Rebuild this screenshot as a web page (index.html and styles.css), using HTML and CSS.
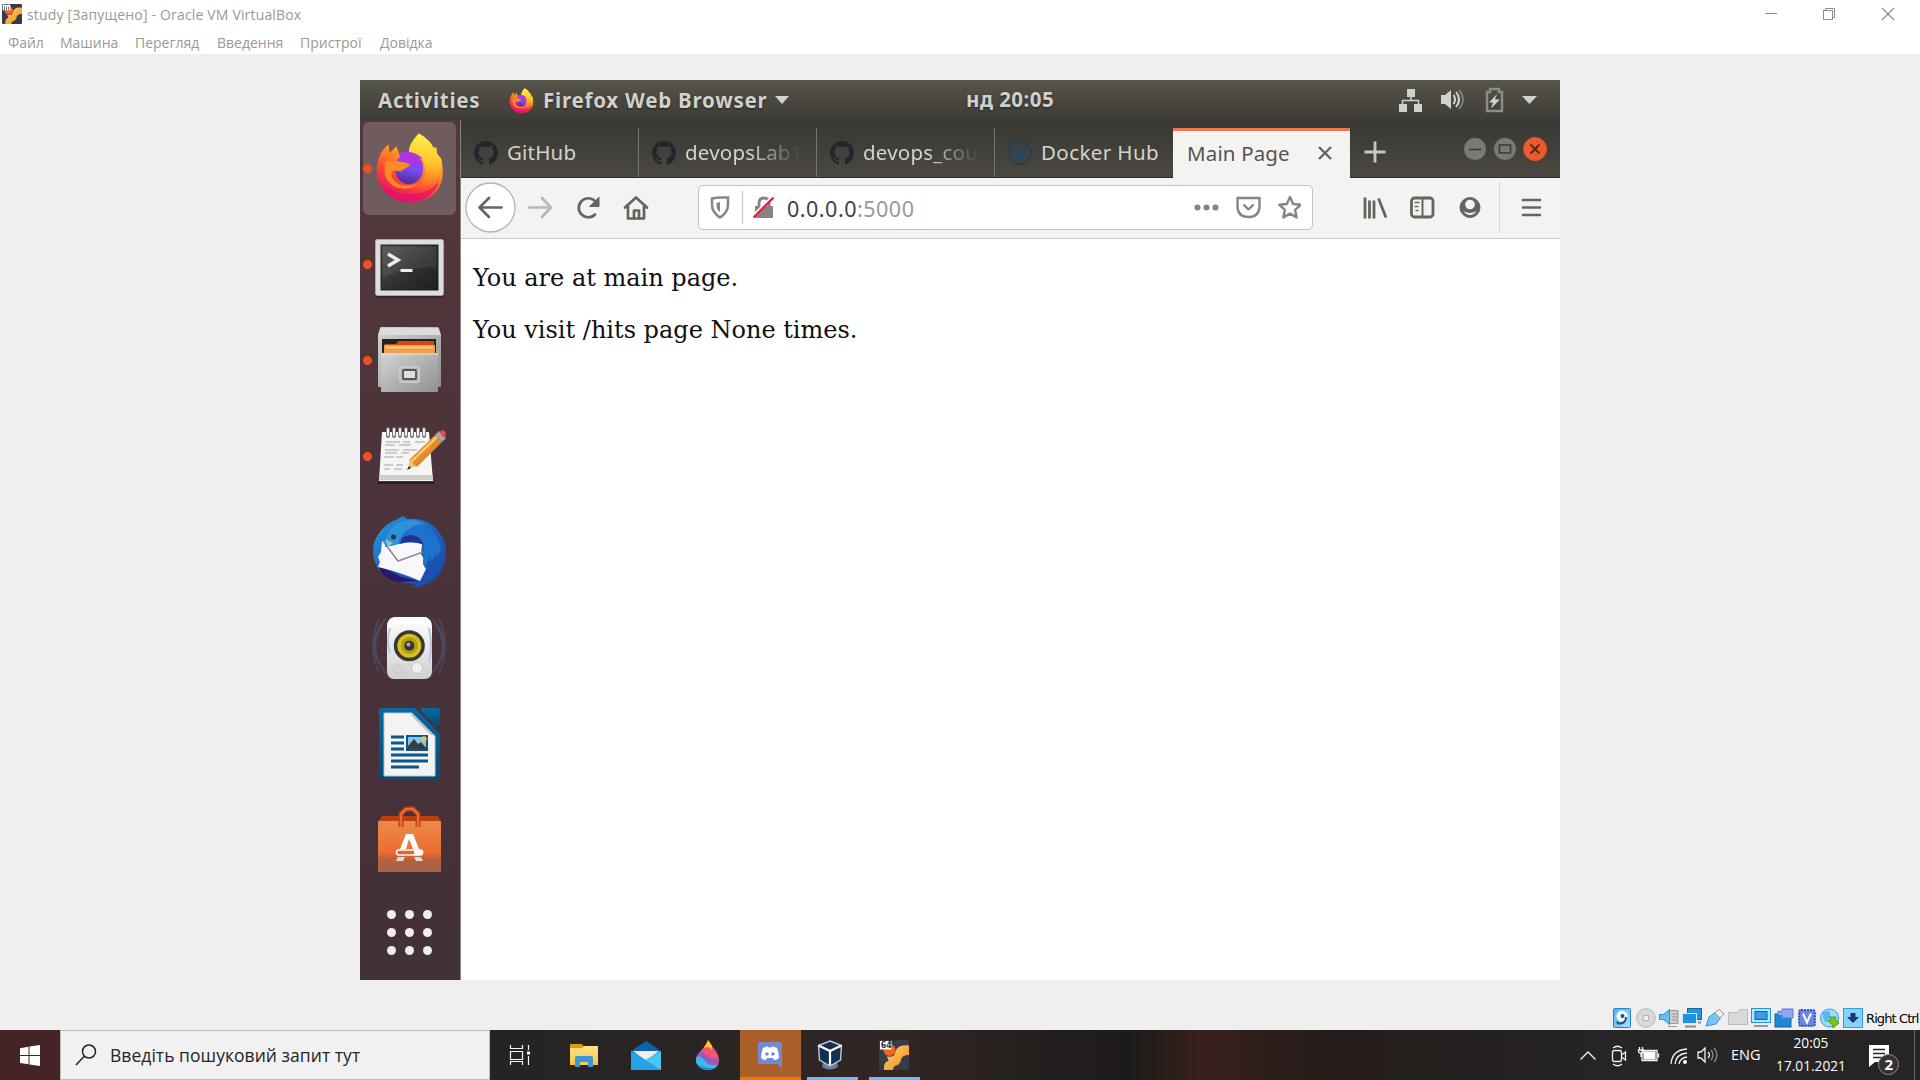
FILE: index.html
```html
<!DOCTYPE html>
<html lang="uk">
<head>
<meta charset="utf-8">
<title>study - Oracle VM VirtualBox</title>
<link rel="stylesheet" href="styles.css">
</head>
<body>
<svg width="0" height="0" class="defs" aria-hidden="true">
  <defs>
    <linearGradient id="fxBody" x1=".8" y1=".1" x2=".35" y2="1"><stop offset="0" stop-color="#ffe03a"/><stop offset=".35" stop-color="#ff9a22"/><stop offset=".68" stop-color="#ff4436"/><stop offset="1" stop-color="#e0106e"/></linearGradient>
    <linearGradient id="fxTail" x1=".5" y1="0" x2=".4" y2="1"><stop offset="0" stop-color="#fff250"/><stop offset=".5" stop-color="#ffc52a"/><stop offset="1" stop-color="#ff7a30" stop-opacity=".2"/></linearGradient>
    <linearGradient id="fxGlobe" x1=".6" y1="0" x2=".4" y2="1"><stop offset="0" stop-color="#b833e1"/><stop offset=".5" stop-color="#7a4cf0"/><stop offset="1" stop-color="#4a2c98"/></linearGradient>
    <linearGradient id="term" x1="0" y1="0" x2="1" y2="1"><stop offset="0" stop-color="#555"/><stop offset=".5" stop-color="#333"/><stop offset="1" stop-color="#1d1d1d"/></linearGradient>
    <linearGradient id="steel" x1="0" y1="0" x2="1" y2="1"><stop offset="0" stop-color="#d4d4d4"/><stop offset="1" stop-color="#909090"/></linearGradient>
    <linearGradient id="white" x1="0" y1="0" x2="0" y2="1"><stop offset="0" stop-color="#fff"/><stop offset="1" stop-color="#cfcfcf"/></linearGradient>
    <linearGradient id="bird" x1="0" y1="0" x2="1" y2="1"><stop offset="0" stop-color="#2a9be0"/><stop offset=".45" stop-color="#1d66c6"/><stop offset="1" stop-color="#1d3f9c"/></linearGradient>
    <linearGradient id="bag" x1="0" y1="0" x2="0" y2="1"><stop offset="0" stop-color="#ea8b4c"/><stop offset=".62" stop-color="#ed6c30"/><stop offset=".75" stop-color="#b9603c"/><stop offset="1" stop-color="#a4644a"/></linearGradient>
    <linearGradient id="writer" x1="0" y1="0" x2="0" y2="1"><stop offset="0" stop-color="#0869a3"/><stop offset="1" stop-color="#054a75"/></linearGradient>
    <linearGradient id="pencil" x1="0" y1="0" x2="1" y2="1"><stop offset="0" stop-color="#ffb54b"/><stop offset="1" stop-color="#c96a12"/></linearGradient>
    <linearGradient id="sky" x1="0" y1="0" x2="1" y2="1"><stop offset="0" stop-color="#4fb0ee"/><stop offset="1" stop-color="#a5e4ff"/></linearGradient>
    <linearGradient id="folder" x1="0" y1="0" x2="0" y2="1"><stop offset="0" stop-color="#ffe08a"/><stop offset="1" stop-color="#fcc73e"/></linearGradient>
    <linearGradient id="gold" x1="0" y1="0" x2="1" y2="1"><stop offset="0" stop-color="#ffd27a"/><stop offset="1" stop-color="#f08a10"/></linearGradient>
    <symbol id="firefox" viewBox="15 11 70 72">
      <path d="M59 12c7 5 10 10 12 16l5-2 2 7 4 5c4 16 1 27-6 35C65 84 44 87 30 77 16 68 13 51 18 37c2-6 5-10 10-14l1 9 7-7 3 8 9 0 11-21z" fill="url(#fxBody)"/>
      <path d="M59 12c-6 6-11 14-10 20 8-1 14 4 16 12 3 14-5 24-18 25 22 3 38-12 35-31l-4-5-1-7-2 3C73 22 67 16 59 12z" fill="url(#fxTail)"/>
      <ellipse cx="49" cy="48" rx="14.500" ry="16" fill="url(#fxGlobe)"/>
      <path d="M38 33c7-3 17-3 25 5l-10-1 11 5c-9-1-12 1-15 2z" fill="#b233e0"/>
      <path d="M24 42c4-3 12-2 17-1 4 1 8 1 9 3-2 4-7 4-9 7-4 0-6-2-10 0-2 12 14 19 28 12-10 10-31 7-35-9z" fill="#ff8a24"/>
      <path d="M19 60c12 18 48 20 61 1-9 28-51 30-61-1z" fill="#e3126c" opacity=".75"/>
    </symbol>
    <symbol id="github" viewBox="0 0 16 16">
      <path fill="#20262c" d="M8 0C3.58 0 0 3.58 0 8c0 3.54 2.29 6.53 5.47 7.59.4.07.55-.17.55-.38 0-.19-.01-.82-.01-1.49-2.01.37-2.53-.49-2.69-.94-.09-.23-.48-.94-.82-1.13-.28-.15-.68-.52-.01-.53.63-.01 1.08.58 1.23.82.72 1.21 1.87.87 2.33.66.07-.52.28-.87.51-1.07-1.78-.2-3.64-.89-3.64-3.95 0-.87.31-1.59.82-2.15-.08-.2-.36-1.02.08-2.12 0 0 .67-.21 2.2.82.64-.18 1.32-.27 2-.27s1.36.09 2 .27c1.53-1.04 2.2-.82 2.2-.82.44 1.1.16 1.92.08 2.12.51.56.82 1.27.82 2.15 0 3.07-1.87 3.75-3.65 3.95.29.25.54.73.54 1.48 0 1.07-.01 1.93-.01 2.2 0 .21.15.46.55.38A8 8 0 0 0 16 8c0-4.42-3.58-8-8-8z"/>
    </symbol>
    <symbol id="vm" viewBox="0 0 30 30">
      <rect width="30" height="30" rx="1.500" fill="#363b47"/>
      <circle cx="10.500" cy="10" r="6" fill="#f5641c"/>
      <path d="M30 5.500c-9-1-13 2-14 8-1 3-3 3.500-8 3l1.500 4.500C5 22 5 26 5 30h9c0-3 2-4.500 4.500-5 3.500-1 3-6 5-8 1.500-1.500 4-2 6.500-2z" fill="url(#gold)"/>
      <rect x="1" y="1" width="11.500" height="8.500" fill="#fff"/>
    </symbol>
  </defs>
</svg>

<header class="host-title">
  <svg class="vm-icon" width="20" height="20"><use href="#vm"/><path d="M2.500 2.500v3.500M4.500 2.500v3.500M6.500 2.500v3.500" stroke="#555" stroke-width=".8"/></svg>
  <span class="title-text">study [Запущено] - Oracle VM VirtualBox</span>
  <svg class="host-controls" width="160" height="28" fill="none" stroke="#8c8c8c">
    <path d="M5 13.500h12"/>
    <rect x="63.500" y="10.500" width="9" height="9"/><path d="M65.500 10.500v-2h9v9h-2"/>
    <path d="M122 8l12 12M134 8l-12 12" stroke-width="1.100"/>
  </svg>
</header>
<nav class="host-menu">
  <span class="m1">Файл</span><span class="m2">Машина</span><span class="m3">Перегляд</span><span class="m4">Введення</span><span class="m5">Пристрої</span><span class="m6">Довідка</span>
</nav>

<main class="vm-area">
  <section class="guest">
    <div class="topbar">
      <div class="top-left">
        <span class="activities">Activities</span>
        <svg class="fx-small" width="25" height="25"><use href="#firefox"/></svg>
        <span class="app-name">Firefox Web Browser</span>
        <svg width="16" height="10"><path d="M1 1h14L8 9z" fill="#d3d3cf"/></svg>
      </div>
      <span class="clock">нд 20:05</span>
      <svg class="indicators" width="160" height="40">
        <g fill="#d0d0cc"><path d="M17 9h8v8h-8zM9 24h8v8H9zM24 24h8v8h-8z"/><path d="M21 16v5M12.500 25v-4.500h16V25" fill="none" stroke="#d0d0cc" stroke-width="1.500"/>
        <path d="M51 15h4l6-5v19l-6-5h-4z"/></g>
        <path d="M63.500 15q3 4.500 0 9" fill="none" stroke="#d0d0cc" stroke-width="2"/>
        <path d="M66 12q6 7.500 0 15" fill="none" stroke="#d0d0cc" stroke-width="2"/>
        <path d="M69 10q8 9.500 0 19" fill="none" stroke="#7b7b74" stroke-width="2"/>
        <path d="M97 12h3V9h9v3h3v19H97z" fill="none" stroke="#8d8d87" stroke-width="2.400"/>
        <path d="M107 14l-8 8.500h4l-2 6 9-9h-5z" fill="#d0d0cc"/>
        <path d="M132 16h15l-7.500 8z" fill="#d0d0cc"/>
      </svg>
    </div>
    <div class="guest-body">
      <aside class="dock">
        <div class="slot active"><i class="dot"></i><svg class="fx-large" width="68" height="71"><use href="#firefox"/></svg></div>
        <div class="slot"><i class="dot"></i><svg width="100" height="96">
          <rect x="15" y="24" width="69" height="58" rx="3" fill="#251a1c" opacity=".5"/>
          <rect x="15.500" y="23.500" width="68" height="56" rx="2" fill="#dedede" stroke="#a9a9a9"/>
          <rect x="21" y="29" width="57" height="45" fill="url(#term)" stroke="#202020"/><path d="M23 31h53v20q-28 0-53 10z" fill="#fff" opacity=".07"/>
          <path d="M28 38l10 6-10 6" fill="none" stroke="#eee" stroke-width="3.500"/><path d="M40.500 54.500h12" stroke="#eee" stroke-width="3"/></svg></div>
        <div class="slot"><i class="dot"></i><svg width="100" height="96">
          <path d="M20 16q0-1 2-1h55q2 0 2 1l2 7v52H18V23z" fill="url(#steel)"/><path d="M21 16h57l3 7H18z" fill="#dcdcdc"/>
          <rect x="22" y="27" width="54" height="16" fill="#222"/><path d="M25 32h11l2-3h36v13H24z" fill="#cf4b14"/><path d="M24 33h51v10H24z" fill="#f0a04a"/><path d="M26 35.500h47" stroke="#fbd9a6" stroke-width="1.500"/>
          <rect x="21" y="41" width="57" height="39" rx="1" fill="url(#steel)"/><path d="M21 42h57" stroke="#e6e6e6"/>
          <rect x="40" y="55" width="19" height="15" rx="2" fill="none" stroke="#c9c9c9" stroke-width="2"/><rect x="43" y="58" width="13" height="9" rx="1" fill="#ddd" stroke="#555" stroke-width="1.800"/></svg></div>
        <div class="slot"><i class="dot"></i><svg width="100" height="96">
          <path d="M18 74h56l1 2H18z" fill="#111" opacity=".6"/><path d="M22 24h47l4 49H19z" fill="#f5f5f3"/><path d="M19.500 67h53l.5 5H19z" fill="#cbcfc8"/>
          <path d="M28 21v7M34 21v7M40 21v7M46 21v7M52 21v7M58 21v7M64 21v7" stroke="#777" stroke-width="4" stroke-linecap="round"/>
          <path d="M28 21v6M34 21v6M40 21v6M46 21v6M52 21v6M58 21v6M64 21v6" stroke="#eee" stroke-width="2" stroke-linecap="round"/>
          <path d="M26 34h14m3 0h7m5 0h10M25 37h10m4 0h12M25 42h14m4 0h14M25 45h12m4 0h8M24 49h10m2 0h7M24 57h9m3 0h7M24 61h6m4 0h8" stroke="#a3a3a3" stroke-width="1"/>
          <path d="M48 61l2-10 7 7z" fill="#e8c38b"/><path d="M47 62l2-4 2 2z" fill="#222"/>
          <path d="M49 52l26-25 7 7-25 25z" fill="url(#pencil)"/><path d="M51 54l26-25" stroke="#ffcb78" stroke-width="2"/>
          <path d="M75 27l4-4 7 7-4 4z" fill="#a8a8a8"/><path d="M79 24q5-4 7 1 0 3-2 5z" fill="#e34b53"/></svg></div>
        <div class="slot"><svg width="100" height="96">
          <path d="M36 16l7-4 4 3c20-2 36 10 39 30 1 18-8 34-28 38l-6 1 4-4-10-1-10-3C22 72 13 62 13 47 13 33 24 20 36 16z" fill="url(#bird)"/>
          <path d="M18 61l24 12 16 4-20 1 2 1C29 77 21 71 18 61z" fill="#26186e"/>
          <path d="M22 37l9 5q18-6 31-2l-1 10 3 5-1 5 3 5-6 12q-20-9-42-14l2-5-2-5 3-5z" fill="#f8f8fb"/>
          <path d="M23 37l15 20 25-9" fill="none" stroke="#8b8b93" stroke-width="1.500"/>
          <path d="M25 43c0-14 9-26 23-27 17 1 31 13 33 30l-4 7-1-5-4 10-2-6-5 12-2-6 1-16c-8-8-21-8-32-2z" fill="#1f72cc"/>
          <path d="M25 43c0-14 9-26 23-27q10 0 17 4c-13 0-23 7-27 20l-8 2z" fill="#2e91d9"/>
          <path d="M42 34c8-6 18-3 22 7-8-4-16-4-24-1z" fill="#243291"/><circle cx="33.500" cy="33" r="2.500" fill="#333"/><path d="M25 35l3 8 5-4z" fill="#7cc5e6"/>
          <path d="M68 66l13-12M65 74l15-13M62 80l14-11" stroke="#1958b0" stroke-width="1.500"/></svg></div>
        <div class="slot"><svg width="100" height="96">
          <g fill="none" stroke="#4f6795" stroke-width="1.500" opacity=".45"><path d="M26 18q-24 28 0 55M23 23q-15 24 0 46M72 18q24 28 0 55M75 23q15 24 0 46M19 19q-12 27 0 54M79 19q12 27 0 54"/></g>
          <path d="M34 17h32q6 3 6 9v46q-1 7-7 7H34q-6 0-7-7V26q0-7 7-9z" fill="url(#white)"/><path d="M34 18h31l4 6H30z" fill="#fff"/>
          <circle cx="49.300" cy="45.700" r="15.500" fill="#383838"/><circle cx="49.300" cy="45.700" r="12" fill="#d9c01c"/><circle cx="49.300" cy="45.700" r="9" fill="#b29c12" stroke="#d9c01c"/><circle cx="49.300" cy="45.700" r="5" fill="#343434"/><circle cx="48.500" cy="44.500" r="2" fill="#aaa"/>
          <rect x="34" y="65" width="8" height="8" rx="2" fill="none" stroke="#c8c8c8"/><circle cx="57" cy="68" r="5.500" fill="#f0f0f0" stroke="#c8c8c8"/><path d="M30 28q-4 13 0 25M69 28q4 18 0 34" stroke="#b7c6df" fill="none" stroke-width="2"/></svg></div>
        <div class="slot"><svg width="100" height="96">
          <path d="M22 12h33l25 26v43q0 3-3 3H22q-3 0-3-3V15q0-3 3-3z" fill="url(#writer)"/><path d="M62 12h16q2 0 2 2v14q-1 4-4 2L61 15q-1-3 1-3z" fill="url(#writer)"/>
          <path d="M24 17h28l23 23v40H24z" fill="#f3f3f3" stroke="#c5c5c5"/><path d="M52 17l23 23-4-1-20-20z" fill="#bbb"/>
          <path d="M31 41h13M31 47h13M31 53h13M31 59h37M31 65h37M31 71h28" stroke="#07578a" stroke-width="3"/>
          <rect x="47" y="40" width="20" height="14" fill="#7ec8ef" stroke="#07578a" stroke-width="2"/><path d="M48 53v-3l6-7 4 5 3-2 6 7z" fill="#3c3c3c"/><circle cx="64" cy="43" r="2.700" fill="#e2c452"/></svg></div>
        <div class="slot"><svg width="100" height="96">
          <path d="M22 24h56l3 6H18z" fill="#bc400f"/><path d="M18 29h63v51H18z" fill="url(#bag)"/>
          <path d="M41 35V22l5-5h7l5 5v13" fill="none" stroke="#b93c10" stroke-width="5"/><path d="M41 35V22l5-5h7l5 5v13" fill="none" stroke="#ee6a35" stroke-width="2.500"/>
          <path d="M46 42h7l6 15h-6l-4-10-3 10h-6z" fill="#fff"/><rect x="36.500" y="58" width="26" height="5" rx="2.500" fill="#ee602a" stroke="#fff" stroke-width="1.600"/><path d="M54 58h8v5h-8z" fill="#fff"/><path d="M38 65h7l-2 4h-7zM54 65h7l2 4h-7z" fill="#ddd"/></svg></div>
        <div class="apps"><i></i><i></i><i></i><i></i><i></i><i></i><i></i><i></i><i></i></div>
      </aside>
      <div class="browser">
        <div class="tabs">
          <div class="tab t1"><svg width="24" height="24"><use href="#github"/></svg><span>GitHub</span></div>
          <div class="tab t2"><svg width="24" height="24"><use href="#github"/></svg><span class="fade">devopsLab1</span></div>
          <div class="tab t3"><svg width="24" height="24"><use href="#github"/></svg><span class="fade">devops_cou</span></div>
          <div class="tab t4"><svg width="24" height="24"><circle cx="12" cy="12" r="11" fill="none" stroke="#224052" stroke-width="1.800"/><path d="M4 12h2v-2h3V7h5v3h2l2-3q1 1 1 3h3q-1 3-4 3-3 6-8 6-6 0-6-7z" fill="#25485f"/></svg><span>Docker Hub</span></div>
          <div class="tab current"><span>Main Page</span><svg width="16" height="16"><path d="M2 2l12 12M14 2L2 14" stroke="#65645f" stroke-width="2.400"/></svg></div>
          <svg class="new-tab" width="24" height="24"><path d="M12 1.500v21M1.500 12h21" stroke="#c9c7c0" stroke-width="2.800"/></svg>
          <div class="window-buttons">
            <svg width="24" height="24"><circle cx="12" cy="12" r="11.500" fill="#7a7973" stroke="#44423d"/><path d="M6 12.500h12" stroke="#3b3a36" stroke-width="1.600"/></svg>
            <svg width="24" height="24"><circle cx="12" cy="12" r="11.500" fill="#7a7973" stroke="#44423d"/><path d="M6.500 8h11v8h-11z" fill="none" stroke="#3b3a36" stroke-width="1.600"/></svg>
            <svg width="24" height="24"><circle cx="12" cy="12" r="11.500" fill="#ee5a2b" stroke="#d25a33"/><path d="M7.500 7.500l9 9M16.500 7.500l-9 9" stroke="#512917" stroke-width="1.800"/></svg>
          </div>
        </div>
        <div class="toolbar">
          <svg class="nav-icons" width="200" height="60" fill="none" stroke="#65655f" stroke-width="2.700" stroke-linecap="round" stroke-linejoin="round">
            <circle cx="29.500" cy="29.500" r="24.500" fill="#fff" stroke="#b5b4b0" stroke-width="1.300"/>
            <path d="M40.500 29.500H19.500m8.500-9.500L18.500 29.500l9.500 9.500"/>
            <path d="M68 29.500h21m-8-9.500l9 9.500-9 9.500" stroke="#b9b8b5"/>
            <path d="M135.500 25A9.500 9.500 0 1 0 134 36.500"/><path d="M138 19.500v9h-9z" fill="#65655f" stroke-width="1"/>
            <path d="M164 29.500l11-10 11 10M167 28.500v12h16V28.500"/><path d="M173 40.500v-8h5v8"/>
          </svg>
          <div class="urlbar">
            <svg class="url-icons" width="88" height="43" fill="none">
              <path d="M22.500 12q5 0 7 0v7q0 8-8 13-8-5-8-13v-6q5-1 9-1z" transform="translate(-.5 -.5)" stroke="#858581" stroke-width="2.500"/><path d="M21 16v10q-4-2-3.500-9z" fill="#858581"/>
              <path d="M43.500 5v33" stroke="#c9c8c6" stroke-width="1.300"/>
              <path d="M56 20h18v12H56z" fill="#858581"/><path d="M60 20v-3q0-5 5-5t5 5v3" stroke="#858581" stroke-width="3"/><path d="M53.500 30l20-20" stroke="#fff" stroke-width="2"/><path d="M54.500 31.500l20-20" stroke="#ff1744" stroke-width="2.400"/>
            </svg>
            <span class="address">0.0.0.0<span class="port">:5000</span></span>
            <svg class="page-actions" width="116" height="43" fill="none" stroke="#858581" stroke-width="2.400" stroke-linejoin="round">
              <g fill="#858581" stroke="none"><circle cx="12.500" cy="21.500" r="3"/><circle cx="21.500" cy="21.500" r="3"/><circle cx="30.500" cy="21.500" r="3"/></g>
              <path d="M52.500 12h22v8q0 11-11 11t-11-11z"/><path d="M58.500 18.500l5 5 5-5"/>
              <path d="M106 11l3.200 7 7.500.8-5.600 5 1.600 7.600-6.700-3.800-6.700 3.800 1.600-7.600-5.600-5 7.500-.8z" transform="translate(-1)"/>
            </svg>
          </div>
          <svg class="tool-icons" width="205" height="60" fill="none" stroke="#65655f">
            <path d="M11 19.500v21M15.500 22.500v18M20 22.500v18M24.500 20.500l7.500 19" stroke-width="2.800"/>
            <rect x="57.500" y="20" width="21.500" height="19" rx="3" stroke-width="2.800"/><path d="M68.500 20.500v18" stroke-width="2"/><path d="M60.500 24.500h5M60.500 28.500h4M61.500 32.500h3" stroke-width="1.300"/>
            <circle cx="116" cy="29.500" r="10" fill="#65655f" stroke-width="1"/><circle cx="116" cy="26.500" r="4.800" fill="#f4f3f2" stroke="none"/><path d="M109.500 33q6.500 4 13 0-2.500 4-6.500 4t-6.500-4z" fill="#f4f3f2" stroke="none"/>
            <path d="M145.500 4v51" stroke="#d7d6d4"/><path d="M169 22h17M169 29.500h17M169 37h17" stroke-width="2.600" stroke-linecap="round"/>
          </svg>
        </div>
        <article class="page"><p class="p1">You are at main page.</p><p class="p2">You visit /hits page None times.</p></article>
      </div>
    </div>
  </section>
</main>

<div class="vm-status">
  <svg width="18" height="20"><rect x=".5" y=".5" width="17" height="19" rx="1" fill="url(#sky)" stroke="#1e86cf"/><circle cx="9" cy="8" r="5.500" fill="#fff"/><circle cx="9.500" cy="8" r="2" fill="#174e8c"/><path d="M13 9q0 7-8 6.500l-1-2" fill="none" stroke="#174e8c" stroke-width="2"/></svg>
  <svg width="20" height="20"><circle cx="10" cy="10" r="9.300" fill="#d9d9d9" stroke="#b7b7b7"/><circle cx="10" cy="10" r="3" fill="#eee" stroke="#aaa"/></svg>
  <svg width="20" height="20"><path d="M11 2.500h8v13h-8M13 6h6M13 9h6M13 12h6M9 18.500h9" fill="#ccc" stroke="#999"/><path d="M.5 6.500h4l6-5v15l-6-5h-4z" fill="#63bef2" stroke="#318dce"/></svg>
  <svg width="20" height="20"><rect x="5.500" y=".5" width="14" height="11" fill="#2a94d8" stroke="#17659f"/><rect x=".5" y="5.500" width="14" height="10" fill="#2093df" stroke="#c9ecff"/><path d="M3 18.500h11M16 14.500h3" stroke="#888" stroke-width="2"/></svg>
  <svg width="20" height="20"><path d="M1 18l3-9 7-5 5 5-5 7z" fill="#72c7f7" stroke="#3993d0"/><path d="M10 5l4-4 5 5-4 4z" fill="#eee" stroke="#999"/></svg>
  <svg width="20" height="20"><path d="M.5 4.500h9l2-3h8v15H.5z" fill="#d9d9d9" stroke="#bcbcbc"/></svg>
  <svg width="20" height="20"><rect x=".5" y=".5" width="19" height="14" fill="#b4e5ff" stroke="#2394df"/><rect x="4" y="3.500" width="12" height="8" fill="#379ee4" stroke="#0d63a3"/><path d="M3 18h14" stroke="#999" stroke-width="2"/></svg>
  <svg width="20" height="20"><rect x="1" y="6" width="16" height="13" fill="#1e86d2" stroke="#0b66a8"/><path d="M4 3l4 1V1h11v9H8V7L4 8z" fill="#8fa7f0" stroke="#5c78cf"/></svg>
  <svg width="20" height="20"><rect x="2" y="2" width="16" height="16" rx="2" fill="#6b86e5" stroke="#3e56b5" stroke-width="2" stroke-dasharray="2 1"/><path d="M6 5.500l4 9 4-9" fill="none" stroke="#fff" stroke-width="2"/></svg>
  <svg width="20" height="20"><circle cx="9.500" cy="10" r="9" fill="#9bdcff" stroke="#319cdb"/><path d="M3 4l7-1v6l-4 6q-4-4-3-11z" fill="#54b9ef"/><path d="M9 9h7l-1 2 4 4-6 5-1-4-4-3 3-2z" fill="#76c81f" stroke="#4d9811"/></svg>
  <svg width="20" height="20"><rect x=".5" y=".5" width="19" height="19" fill="#86d2fb" stroke="#309ddd"/><path d="M7.500 5h5v4H16l-6 6-6-6h3.500z" fill="#123c70"/></svg>
  <span>Right Ctrl</span>
</div>

<footer class="taskbar">
  <div class="start"><svg width="20" height="21" fill="#fff"><path d="M0 3.200l8.500-1.400V10H0zM9.500 1.600L20 0v10H9.500zM0 11h8.500v8.200L0 18zM9.500 11H20v10L9.500 19.400z"/></svg></div>
  <div class="search"><svg width="22" height="22" fill="none" stroke="#222" stroke-width="1.500"><circle cx="14" cy="7.500" r="6.500"/><path d="M9.300 12.300L1 21"/></svg><span>Введіть пошуковий запит тут</span></div>
  <div class="app task-view"><svg width="22" height="22" fill="none" stroke="#f5f5f5" stroke-width="1.200"><path d="M1.500 1v3.500h12V1M1.500 21v-3.500h12V21M1.500 7.500h12v8h-12zM19.500 1v5M19.500 12v9"/><path d="M18 7.500h3v3h-3z" fill="#fff" stroke="none"/></svg></div>
  <div class="app explorer"><svg width="28" height="24"><path d="M0 1h12l2 3v5H0z" fill="#dc9b0b"/><path d="M0 5h12l2-2h14v19H0z" fill="url(#folder)"/><path d="M5 24V15q0-2 2-2h14q2 0 2 2v9h-5v-5h-8v5z" fill="#3d96db"/></svg></div>
  <div class="app mail"><svg width="30" height="29"><path d="M0 10L15 0l15 10v8H0z" fill="#0b62b3"/><path d="M2 10h26L15 20z" fill="#f1eeec"/><path d="M0 10l15 9 15-9v19H0z" fill="#32b0ee"/><path d="M30 10v19L14 19z" fill="#49c5f7"/><path d="M0 29V10l30 19z" fill="#25a2e8"/></svg></div>
  <div class="app paint"><svg width="24" height="30"><clipPath id="drop"><path d="M12 0c5 8 11 13 11 20 0 6-5 10-11 10S0 26 0 20C0 13 9 9 12 0z"/></clipPath><g clip-path="url(#drop)"><path d="M0 0h24v30H0z" fill="#ef5578"/><path d="M9 0h7v10q-3-5-8-2z" fill="#ffca12"/><path d="M0 11q5-2 9 3t15 5v9H0z" fill="#9a58bd"/><path d="M0 17q5-2 9 4t15 3v6H0z" fill="#36b9ee"/><path d="M0 23q6 6 18 5v2H0z" fill="#168dd2"/></g></svg></div>
  <div class="app discord"><svg width="24" height="26"><path d="M2 0h20q2 0 2 2v24l-5-4H2q-2 0-2-2V2q0-2 2-2z" fill="#7289d5"/><path d="M5 6q3-2 5-1.500l.5 1h3l.5-1q2 0 5 1.500 2 5 2 10-2 2-5 2l-1-2h-6l-1 2q-3 0-5-2 0-5 2-10z" fill="#fff"/><circle cx="9" cy="12" r="1.800" fill="#7289d5"/><circle cx="15" cy="12" r="1.800" fill="#7289d5"/></svg></div>
  <div class="app running vbox"><svg width="26" height="30"><path d="M6 22h14l1 5q-8 5-16 0z" fill="#6a7d9b"/><path d="M13 1l11.500 4.500-1 14.500L13 26 2.500 20l-1-14.500z" fill="#14304f" stroke="#b8cbe0" stroke-width="1.400"/><path d="M1.500 5.500L13 11l11.500-5.500M13 11v14" fill="none" stroke="#fff" stroke-width="2.200"/></svg></div>
  <div class="app running"><svg width="30" height="30"><use href="#vm"/><text x="1.700" y="8.300" class="bits">64</text></svg></div>
  <div class="tray">
    <svg width="150" height="50" fill="none" stroke="#f3f3f3" stroke-width="1.300">
      <path d="M10.500 29.500l7.500-7.500 7.500 7.500"/>
      <rect x="42.500" y="20.500" width="9" height="11" rx="2"/><path d="M51.500 25l4-3v8l-4-3M43 18q4.500-3.500 9 0M43 34q4.500 3.500 9 0"/>
      <rect x="74" y="22" width="11" height="7" fill="#fff"/><path d="M72 20.500h15v10H72zM88.500 23.500v4M69.500 17v2.500m3-2.500v2.500m-4 .5h5v2q-2.500 2.500-5 0zM71 23v4"/>
      <path d="M101 34q1-14 16-15M105 34q1-10 12-11M109 34q1-6 8-7"/><circle cx="115" cy="32" r="2" fill="#fff" stroke="none"/>
      <path d="M128 22h3l4-4v14l-4-4h-3zM138 22q3 3 0 6"/><path d="M141 20q4 5 0 10M144 18q6 7 0 14" stroke="#8c8c8c"/>
    </svg>
    <span class="lang">ENG</span>
    <div class="datetime"><span class="time">20:05</span><span class="date">17.01.2021</span></div>
    <svg class="notice" width="55" height="50"><path d="M4 15h20v17H10l-6 5z" fill="#fff"/><path d="M8 19.500h12M8 23.500h12M8 27.500h9" stroke="#282525" stroke-width="1.300"/><circle cx="23.500" cy="34.500" r="10" fill="#343232" stroke="#8d8d8d"/><text x="19.500" y="40" class="badge">2</text><path d="M49.500 0v50" stroke="#6c6a6a"/></svg>
  </div>
</footer>
</body>
</html>
```
FILE: styles.css
```css
* { box-sizing: border-box; }
html, body { margin: 0; width: 1920px; height: 1080px; overflow: hidden; }
body { display: flex; flex-direction: column; background: #efefef; font-family: "Open Sans", "Noto Sans", sans-serif; }
svg { display: block; flex: none; }
span { white-space: nowrap; }
.defs { position: absolute; }

.host-title { display: flex; height: 28px; background: #fff; padding-left: 2px; color: #999; }
.vm-icon { margin-top: 4px; }
.title-text { margin-left: 5px; font-size: 14px; line-height: 30px; letter-spacing: .17px; }
.host-controls { margin-left: auto; }
.host-menu { display: flex; height: 26px; background: #fff; padding-left: 8px; color: #999; font-size: 14px; line-height: 30px; }
.m1 { width: 52px; }
.m2 { width: 75px; }
.m3 { width: 82px; }
.m4 { width: 83px; }
.m5 { width: 80px; }

.vm-area { height: 954px; padding: 26px 360px 0; }
.guest { height: 900px; background: #fff; }
.topbar { display: flex; height: 40px; background: linear-gradient(#57544a, #3e3c37); color: #d0d1cc; font: 700 20.500px/41px "Noto Sans", sans-serif; text-shadow: 0 1px 2px #222; }
.top-left { display: flex; align-items: center; width: 606px; padding-left: 18px; }
.activities { width: 131px; letter-spacing: .7px; }
.fx-small { margin: 0 9px 0 0; }
.app-name { width: 231px; letter-spacing: .77px; }
.clock { width: 412px; line-height: 38px; letter-spacing: .45px; }
.indicators { margin-left: 12px; }
.guest-body { display: flex; height: 860px; }

.dock { display: flex; flex-direction: column; width: 101px; background: linear-gradient(#53383a, #4b3339 45%, #423137); border-right: 1px solid #8e8284; }
.slot { position: relative; width: 100px; height: 96px; flex: none; }
.slot.active { width: 93px; height: 93px; margin: 2px 0 1px 3px; border-radius: 6px; background: #705c5e; padding: 10px 0 0 13px; }
.dot { position: absolute; left: 3px; top: 44px; width: 9px; height: 9px; border-radius: 50%; background: #e95420; }
.active .dot { left: 0; top: 42px; }
.apps { display: grid; grid-template-columns: repeat(3, 9px); grid-auto-rows: 9px; gap: 9px; padding: 22px 0 0 27px; }
.apps i { border-radius: 50%; background: #eeeeec; }

.browser { display: flex; flex-direction: column; width: 1099px; }
.tabs { display: flex; height: 58px; background: linear-gradient(#393732, #4a4841); border-bottom: 1px solid #2d2c28; color: #d5d3cc; font: 20.500px/51px "Noto Sans", sans-serif; }
.tab { display: flex; align-items: center; height: 49px; margin-top: 8px; padding-left: 13px; border-right: 1px solid #77756f; letter-spacing: .2px; }
.tab svg { margin-right: 9px; }
.t1 { width: 178px; }
.t2 { width: 178px; }
.t3 { width: 178px; }
.t4 { width: 178px; border-right: 0; letter-spacing: .4px; }
.fade { width: 116px; overflow: hidden; -webkit-mask-image: linear-gradient(90deg, #000 55%, transparent); mask-image: linear-gradient(90deg, #000 55%, transparent); }
.tab.current { width: 177px; height: 50px; background: #f4f3f2; border: 0; border-top: 3px solid #ed764d; color: #54534f; padding: 0 17px 3px 14px; justify-content: space-between; line-height: 44px; letter-spacing: .15px; }
.tab.current svg { margin: 0; }
.new-tab { margin: 20px 75.500px 0 13px; }
.window-buttons { display: flex; gap: 6px; margin-top: 17px; }
.toolbar { display: flex; height: 61px; background: #f4f3f2; border-bottom: 1px solid #c9c8c6; }
.urlbar { display: flex; width: 615px; height: 45px; margin: 7px 0 0 37px; background: #fff; border: 1px solid #c4c2bf; border-radius: 5px; }
.address { color: #414141; font: 21.500px/45px "Noto Sans", sans-serif; letter-spacing: .5px; }
.port { color: #999; }
.page-actions { margin-left: auto; margin-right: 11px; }
.tool-icons { margin-left: 40.500px; }
.page { padding: 22px 12px; color: #101010; font: 24px/34px "DejaVu Serif", serif; }
.page p { margin: 0 0 18px; }

.vm-status { display: flex; height: 22px; gap: 3px; padding-left: 1613px; }
.vm-status svg:first-child { margin-right: 2px; }
.vm-status span { color: #000; font: 13px/21px "DejaVu Sans", sans-serif; letter-spacing: -.9px; }

.taskbar { display: flex; height: 50px; background: linear-gradient(90deg, #242323 0 450px, #302624 900px, #1d1b1a 1130px, #38201c 1200px, #251d1b 1330px, #262424 1600px); color: #fff; }
.start { display: flex; align-items: center; justify-content: center; width: 60px; background: #442424; }
.search { display: flex; align-items: center; width: 430px; background: #f1f1f1; border: 1px solid #bdbdbd; padding-left: 14px; color: #252525; font-size: 17.500px; }
.search span { margin-left: 13px; line-height: 48px; letter-spacing: .04px; }
.app { display: flex; justify-content: center; align-items: center; width: 62px; height: 50px; }
.task-view { padding-right: 2px; }
.explorer { width: 64px; padding-right: 1px; }
.mail { padding-right: 2px; }
.paint { padding-right: 2px; }
.discord { width: 61px; padding: 3px 2px 0 0; background: #a96029; border-bottom: 3px solid #ff7200; }
.vbox { padding-right: 5px; }
.running { position: relative; }
.running::after { content: ""; position: absolute; left: 6px; bottom: 0; width: 51px; height: 3px; background: #76b9ed; }
.bits { fill: #333; font: bold 8px "DejaVu Sans", sans-serif; }
.tray { display: flex; margin-left: auto; }
.lang { width: 38px; margin-left: 11px; font-size: 14.500px; line-height: 50px; }
.datetime { display: flex; flex-direction: column; align-items: center; width: 84px; padding-top: 2px; font-size: 13.700px; line-height: 22.500px; }
.notice { margin-left: 12px; }
.badge { fill: #fff; font: bold 15px "Open Sans", sans-serif; }
```
